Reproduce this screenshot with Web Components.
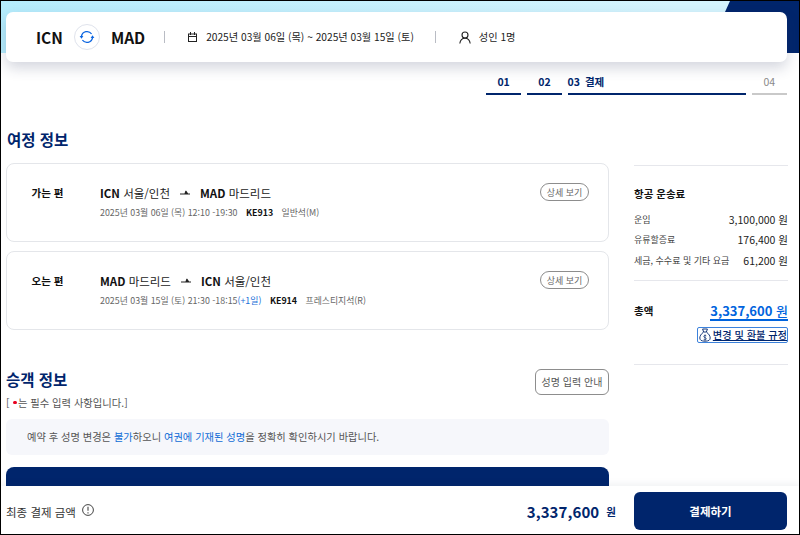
<!DOCTYPE html>
<html lang="ko">
<head>
<meta charset="utf-8">
<title>결제</title>
<style>
  html, body { margin: 0; padding: 0; height: 100%; background: #fff; overflow: hidden; }
  body { font-family: "Noto Sans CJK KR", "Noto Sans", sans-serif; color: #111; }
</style>
</head>
<body>
<booking-page>
  <trip-header slot="header"></trip-header>
  <step-bar slot="steps"></step-bar>
  <section-title slot="main">여정 정보</section-title>
  <flight-card slot="main" label="가는 편" from="ICN" from-city="서울/인천" to="MAD" to-city="마드리드"
    when="2025년 03월 06일 (목) 12:10 -19:30" flight="KE913" seat="일반석(M)"></flight-card>
  <flight-card slot="main" label="오는 편" from="MAD" from-city="마드리드" to="ICN" to-city="서울/인천"
    when="2025년 03월 15일 (토) 21:30 -18:15" plus="(+1일)" flight="KE914" seat="프레스티지석(R)"></flight-card>
  <passenger-info slot="main"></passenger-info>
  <fare-summary slot="side"></fare-summary>
  <pay-bar slot="footer"></pay-bar>
</booking-page>

<script>
const NAVY = '#00256c';
const BLUE = '#0064de';

class BookingPage extends HTMLElement {
  constructor() {
    super();
    this.attachShadow({ mode: 'open' });
    this.shadowRoot.innerHTML = `
      <style>
        :host { display: flex; flex-direction: column; width: 800px; height: 535px; box-sizing: border-box;
          border: 1px solid #000; position: relative; overflow: hidden; background: #fff; }
        .top { height: 52px; flex: none; position: relative;
          background: linear-gradient(to right, #b5ecfc, #d4f4fd 85%); }
        .top svg { position: absolute; right: 0; top: 0; }
        .head-wrap { height: 0; flex: none; position: relative; padding: 0 12px 0 5px; }
        .content { flex: 1; min-height: 0; overflow: hidden; display: flex; flex-direction: column; padding: 21px 12px 0 5px; }
        .cols { display: grid; grid-template-columns: 603px 154px; column-gap: 25px; margin-top: 33px; }
        .main { display: flex; flex-direction: column; }
        .foot { flex: none; }
      </style>
      <div class="top">
        <svg width="74" height="52" viewBox="0 0 74 52"><path d="M5 0H74V52H0V11Z" fill="${NAVY}"/></svg>
      </div>
      <div class="head-wrap"><slot name="header"></slot></div>
      <div class="content">
        <slot name="steps"></slot>
        <div class="cols">
          <div class="main"><slot name="main"></slot></div>
          <div><slot name="side"></slot></div>
        </div>
      </div>
      <div class="foot"><slot name="footer"></slot></div>`;
  }
}

class TripHeader extends HTMLElement {
  constructor() {
    super();
    this.attachShadow({ mode: 'open' });
    this.shadowRoot.innerHTML = `
      <style>
        :host { display: flex; align-items: center; box-sizing: border-box; height: 50px; margin-top: -41px;
          position: relative; background: #fff; border-radius: 7px; padding-left: 30px;
          box-shadow: 0 6px 14px rgba(40, 50, 90, .2); }
        .code { font-size: 15.5px; font-weight: 700; color: #111; line-height: 20px; }
        .swap { width: 26px; height: 26px; box-sizing: border-box; border: 1px solid #dfe3ec; border-radius: 50%;
          display: flex; align-items: center; justify-content: center; margin: 0 11px; }
        .sep { width: 1px; height: 12px; background: #b9bcc4; }
        .txt { font-size: 10.2px; color: #222; line-height: 16px; }
        svg { display: block; }
      </style>
      <span class="code">ICN</span>
      <span class="swap">
        <svg width="16" height="16" viewBox="0 0 16 16" fill="none" stroke="#0a64e0" stroke-width="1.3">
          <path d="M12.600 5A5.600 5.600 0 0 0 2.500 7.200"/>
          <path d="M3.400 11A5.600 5.600 0 0 0 13.500 8.800"/>
          <path d="M.6 7h3.800L2.500 9.700z" fill="#0a64e0" stroke="none"/>
          <path d="M11.600 9h3.800L13.500 6.300z" fill="#0a64e0" stroke="none"/>
        </svg>
      </span>
      <span class="code">MAD</span>
      <span class="sep" style="margin:0 23px 0 19px"></span>
      <svg width="9" height="10" viewBox="0 0 9 10" fill="none" stroke="#222" stroke-width="1" style="margin-right:9px">
        <rect x=".5" y="2" width="8" height="7.500"/><path d="M.5 4.500h8M2.500 0v3M6.500 0v3"/>
      </svg>
      <span class="txt">2025년 03월 06일 (목) ~ 2025년 03월 15일 (토)</span>
      <span class="sep" style="margin:0 23px 0 21px"></span>
      <svg width="12" height="13" viewBox="0 0 12 13" fill="none" stroke="#222" stroke-width="1.1" style="margin-right:8px">
        <circle cx="6" cy="4" r="3"/><path d="M.8 12.500C1.200 9.500 3 7.200 6 7.200s4.800 2.300 5.200 5.300"/>
      </svg>
      <span class="txt">성인 1명</span>`;
  }
}

class StepBar extends HTMLElement {
  constructor() {
    super();
    this.attachShadow({ mode: 'open' });
    this.shadowRoot.innerHTML = `
      <style>
        :host { display: flex; justify-content: flex-end; gap: 5.4px; font-size: 10.5px; font-weight: 700; color: ${NAVY}; }
        .s { box-sizing: border-box; border-bottom: 2px solid ${NAVY}; height: 21px; line-height: 16px; text-align: center; }
        .n { width: 35.5px; }
        .cur { width: 178.500px; text-align: left; word-spacing: 2px; }
        .off { border-color: #c9c9c9; color: #8a8a8a; font-weight: 400; }
      </style>
      <div class="s n">01</div>
      <div class="s n">02</div>
      <div class="s cur">03 결제</div>
      <div class="s n off">04</div>`;
  }
}

class SectionTitle extends HTMLElement {
  constructor() {
    super();
    this.attachShadow({ mode: 'open' });
    this.shadowRoot.innerHTML = `
      <style>
        :host { display: block; font-size: 15.5px; font-weight: 700; color: ${NAVY}; line-height: 22px; margin: 0 0 13px 1px; }
      </style><slot></slot>`;
  }
}

class FlightCard extends HTMLElement {
  connectedCallback() {
    const a = n => this.getAttribute(n) || '';
    this.attachShadow({ mode: 'open' });
    this.shadowRoot.innerHTML = `
      <style>
        :host { display: flex; box-sizing: border-box; height: 79px; border: 1px solid #e4e6ea; border-radius: 8px;
          padding: 21px 19px 0 0; margin-bottom: 9px; }
        .label { width: 81px; margin-right: 12px; flex: none; font-size: 10.5px; font-weight: 700; text-align: center; line-height: 16px; }
        .body { flex: 1; }
        .route { display: flex; align-items: center; font-size: 11.5px; line-height: 16px; color: #222; }
        .route b { font-weight: 700; color: #111; }
        .route svg { margin: 0 10px; }
        .meta { margin-top: 5px; font-size: 8.85px; line-height: 14px; color: #666; white-space: nowrap; }
        .meta b { color: #111; font-weight: 700; margin: 0 6px; }
        .meta i { font-style: normal; color: #1c6fd8; }
        button { all: unset; box-sizing: border-box; height: 18px; width: 49px; border: 1px solid #8d8d8d; border-radius: 9px;
          font-size: 9px; line-height: 15px; text-align: center; color: #666; margin-top: -2px; }
      </style>
      <div class="label">${a('label')}</div>
      <div class="body">
        <div class="route"><b>${a('from')}</b>&nbsp;${a('from-city')}
          <svg width="10" height="6" viewBox="0 0 10 6"><path d="M0 3.400h10v1H0zM4.500 3.600 5.400 .8h.9l1.800 2.800z" fill="#222"/></svg>
          <b>${a('to')}</b>&nbsp;${a('to-city')}</div>
        <div class="meta">${a('when')}<i>${a('plus')}</i> <b>${a('flight')}</b> ${a('seat')}</div>
      </div>
      <button>상세 보기</button>`;
  }
}

class PassengerInfo extends HTMLElement {
  constructor() {
    super();
    this.attachShadow({ mode: 'open' });
    this.shadowRoot.innerHTML = `
      <style>
        :host { display: block; margin-top: 30px; }
        .row { display: flex; justify-content: space-between; align-items: flex-start; height: 27px; }
        h2 { margin: -1px 0 0; font-size: 15.5px; line-height: 22px; font-weight: 700; color: ${NAVY}; }
        button { all: unset; box-sizing: border-box; width: 74px; height: 26px; border: 1px solid #8d8d8d; border-radius: 6px;
          font-size: 10px; line-height: 24px; text-align: center; color: #555; }
        .req { font-size: 10.3px; line-height: 14px; color: #555; }
        .req i { display: inline-block; width: 3.5px; height: 3.5px; border-radius: 50%; background: #e8001f; vertical-align: 3px; margin: 0 1px; }
        .note { margin-top: 9px; height: 36px; background: #f6f7fb; border-radius: 6px; padding-left: 21px; font-size: 10.25px; line-height: 36px; color: #555; }
        .note em { font-style: normal; color: #0f6bd6; }
        .panel { margin-top: 12px; height: 60px; background: ${NAVY}; border-radius: 8px 8px 0 0; }
      </style>
      <div class="row"><h2>승객 정보</h2><button>성명 입력 안내</button></div>
      <div class="req">[ <i></i>는 필수 입력 사항입니다.]</div>
      <div class="note">예약 후 성명 변경은 <em>불가</em>하오니 <em>여권에 기재된 성명</em>을 정확히 확인하시기 바랍니다.</div>
      <div class="panel"></div>`;
  }
}

class FareSummary extends HTMLElement {
  constructor() {
    super();
    this.attachShadow({ mode: 'open' });
    this.shadowRoot.innerHTML = `
      <style>
        :host { display: block; border-top: 1px solid #e6e7ec; margin-top: 37px; }
        h3 { margin: 20px 0 7px; font-size: 10.5px; line-height: 16px; font-weight: 700; }
        .line { display: flex; justify-content: space-between; align-items: center; height: 20.5px; font-size: 9px; color: #444; white-space: nowrap; }
        .line span:last-child { font-size: 10.5px; color: #222; }
        .block { border-top: 1px solid #e6e7ec; margin-top: 9px; padding-top: 22px; height: 84px; box-sizing: border-box; display: flex; justify-content: space-between; }
        .total-l { font-size: 10.5px; font-weight: 700; line-height: 16px; }
        .right { display: flex; flex-direction: column; align-items: flex-end; }
        .total { font-size: 13px; font-weight: 700; color: ${BLUE}; line-height: 16px; border-bottom: 2px solid ${BLUE}; }
        .total small { font-size: 13px; font-weight: 500; }
        .rule { display: flex; align-items: center; gap: 2px; padding-left: 1px; margin-top: 6px; height: 16px; box-sizing: border-box; border: 1px solid #3c82dc; border-radius: 2px;
          font-size: 10.2px; font-weight: 500; color: ${NAVY}; text-decoration: underline; white-space: nowrap; }
        .end { border-top: 1px solid #e6e7ec; }
      </style>
      <h3>항공 운송료</h3>
      <div class="line"><span>운임</span><span>3,100,000 원</span></div>
      <div class="line"><span>유류할증료</span><span>176,400 원</span></div>
      <div class="line"><span>세금, 수수료 및 기타 요금</span><span>61,200 원</span></div>
      <div class="block">
        <span class="total-l">총액</span>
        <div class="right">
          <span class="total">3,337,600 <small>원</small></span>
          <span class="rule">
            <svg width="12" height="14" viewBox="0 0 12 14" fill="none" stroke="${NAVY}" stroke-width=".9">
              <path d="M3.600 1h4.800L7.400 4H4.600z"/><path d="M4.600 4C2 6 .8 8.200.8 10c0 2 1.600 3.200 5.200 3.200s5.200-1.200 5.200-3.200c0-1.800-1.200-4-3.800-6"/>
              <path d="M7.300 7.800C6.800 7.200 4.800 7.200 4.800 8.500s2.500 1 2.500 2.300-2 1.200-2.600.6M6 6.500v6" stroke-width=".7"/>
            </svg>변경 및 환불 규정</span>
        </div>
      </div>
      <div class="end"></div>`;
  }
}

class PayBar extends HTMLElement {
  constructor() {
    super();
    this.attachShadow({ mode: 'open' });
    this.shadowRoot.innerHTML = `
      <style>
        :host { display: flex; align-items: center; box-sizing: border-box; height: 48px; padding: 2px 12px 0 5px; background: #fff;
          position: relative; box-shadow: 0 -3px 6px rgba(40, 50, 90, .06); }
        .l { font-size: 11.5px; color: #333; line-height: 16px; margin-top: 1px; }
        svg { margin: -2px 0 0 6px; }
        .amt { margin-left: auto; font-size: 15px; font-weight: 700; color: ${NAVY}; letter-spacing: .1px; }
        .won { font-size: 10.5px; font-weight: 700; color: ${NAVY}; margin: 1px 18px 0 7px; }
        button { all: unset; width: 153px; height: 38px; border-radius: 6px; background: ${NAVY}; color: #fff; font-size: 11.5px; font-weight: 700; text-align: center; line-height: 38px; }
      </style>
      <span class="l">최종 결제 금액</span>
      <svg width="12" height="12" viewBox="0 0 12 12" fill="none" stroke="#444"><circle cx="6" cy="6" r="5.400"/><path d="M6 2.800v4M6 8.200v1.200" stroke-width="1.100"/></svg>
      <span class="amt">3,337,600</span><span class="won">원</span>
      <button>결제하기</button>`;
  }
}

customElements.define('booking-page', BookingPage);
customElements.define('trip-header', TripHeader);
customElements.define('step-bar', StepBar);
customElements.define('section-title', SectionTitle);
customElements.define('flight-card', FlightCard);
customElements.define('passenger-info', PassengerInfo);
customElements.define('fare-summary', FareSummary);
customElements.define('pay-bar', PayBar);
</script>
</body>
</html>
